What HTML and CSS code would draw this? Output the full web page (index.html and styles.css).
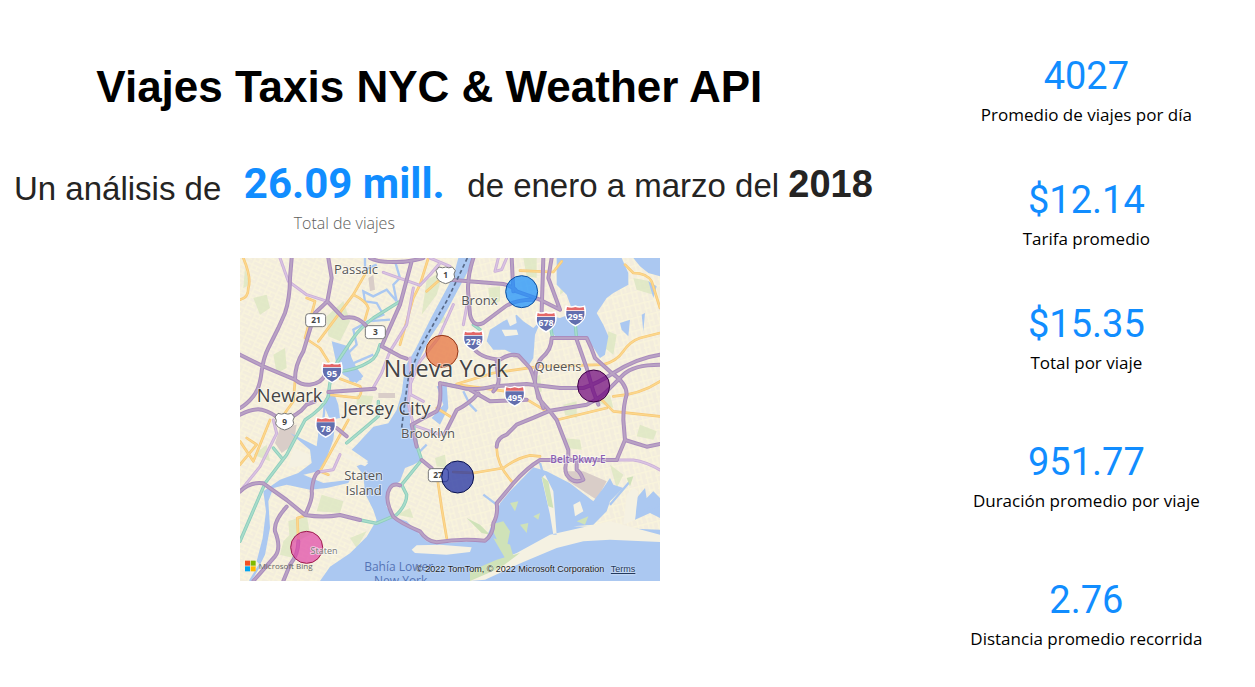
FILE: index.html
```html
<!DOCTYPE html>
<html lang="es">
<head>
<meta charset="utf-8">
<meta name="viewport" content="width=device-width, initial-scale=1">
<title>Viajes Taxis NYC &amp; Weather API</title>
<link rel="stylesheet" href="styles.css">
</head>
<body>
<div class="report">
  <main class="overview">
    <h1 class="title">Viajes Taxis NYC &amp; Weather API</h1>
    <div class="summary">
      <p class="phrase phrase-start">Un análisis de</p>
      <p class="total"><strong class="total-value">26.09 mill.</strong><span class="total-label">Total de viajes</span></p>
      <p class="phrase">de enero a marzo del <b class="year">2018</b></p>
    </div>
    <figure class="map">
      <svg class="map-canvas" viewBox="0 0 1260 969" role="img" aria-label="Mapa de Nueva York">
        <defs>
          <pattern id="streets" width="34" height="26" patternUnits="userSpaceOnUse" patternTransform="rotate(24)">
            <path class="street" d="M0 3H34M8 0V26M24 0V14M8 15H34"/>
          </pattern>
          <pattern id="streets-east" width="30" height="38" patternUnits="userSpaceOnUse" patternTransform="rotate(-14)">
            <path class="street" d="M0 5H30M5 0V38M18 5V38M0 24H18"/>
          </pattern>
          <g id="interstate">
            <path class="shield-edge" d="M-29-30Q-14-24 0-30Q14-24 29-30Q36-8 28 10Q18 26 0 34Q-18 26-28 10Q-36-8-29-30Z"/>
            <path class="shield-blue" d="M-27-13H27Q29 0 24 10Q15 23 0 29Q-15 23-24 10Q-29 0-27-13Z"/>
            <path class="shield-red" d="M-25-25Q-12-20 0-25Q12-20 25-25L27-15H-27Z"/>
          </g>
          <path id="us-route" class="route" d="M-20-23Q-9-18 0-23Q9-18 20-23L29-12Q22-2 27 8Q22 21 0 27Q-22 21-27 8Q-22-2-29-12Z"/>
          <g id="road-lilac">
            <path d="M120 0L145 70L200 110L262 130M520 90L500 200L450 280L425 345L398 392M430 43L540 82L570 50L600 15M570 0L630 25M775 0L765 40L785 35L800 0M100 486L110 526L60 626L0 700M235 642L280 635L300 590M1130 606L1180 606Q1220 612 1260 636M640 140L595 240L540 310L510 380L505 440L520 500M510 300L512 410L550 430M515 500L600 530M685 120L670 200"/>
          </g>
          <g id="road-purple">
            <path d="M155 0L150 60Q150 120 135 165L115 210L85 270Q70 300 65 340Q60 390 40 415Q20 440 0 450M265 0L275 60L262 130L225 165L190 280Q165 320 165 365M0 290L70 325L165 365Q185 382 210 380Q245 375 255 350M262 130L310 180Q350 170 380 205M390 0Q410 12 460 12Q500 14 550 0M515 10L480 140L440 230L425 265L480 295L500 302M265 402L405 392M0 470Q40 450 65 455Q100 465 120 486Q170 480 200 440L225 430"/>
            <path d="M700 0Q680 60 685 110L690 170Q700 210 730 195L790 150Q820 125 880 125M630 65L790 78Q820 85 830 100L900 125L960 155M815 0L820 100M910 0L905 160M935 0L925 60L960 155M700 270Q720 300 780 305Q810 285 835 292L870 330Q885 360 895 420L930 460L950 486L985 576V606M935 240Q935 275 905 300Q885 320 885 380L910 450M935 240H1040Q1055 270 1065 300L1115 345Q1160 375 1160 410Q1150 440 1150 486L1155 546L1130 606M1010 245L1040 330L1060 400L1075 440M600 376L660 388Q700 400 760 385L860 378L960 390L1030 390Q1075 375 1120 345Q1190 300 1260 290M690 395L750 430L860 425M760 400Q780 380 775 355Q770 330 770 305M770 566Q770 540 800 530L830 500Q880 480 930 458L1040 440Q1080 420 1100 400L1150 350Q1180 320 1260 320"/>
            <path d="M0 701Q30 670 70 676L140 726L195 771Q250 780 300 771L360 786M195 771Q220 720 215 700Q220 650 235 642M140 746Q100 790 105 820Q125 870 105 895L40 969M175 850Q175 890 150 920L130 969M460 776Q430 720 450 690Q460 675 480 682M460 776Q480 795 540 820Q560 850 590 853Q660 840 735 848Q760 830 760 796Q775 770 770 736L820 676Q860 630 900 606H1130M1155 546L1220 566L1260 558M985 600Q970 625 980 650Q1000 680 1030 665Q1020 640 1010 635V610M545 606L575 631M600 376Q605 440 590 460L550 481L515 500L530 566M715 406Q690 435 650 456L615 526M290 510L320 535"/>
          </g>
          <g id="road-teal">
            <path d="M480 130L400 180Q360 210 340 240L300 300Q270 340 265 415Q250 450 195 486L140 590L75 676L0 850M420 260Q410 300 390 310Q350 335 300 340M100 570L125 600M320 555L380 505L415 475V430M930 200L938 240M1005 190L1010 245M700 200L720 215M360 786L410 796L470 770Q500 740 500 710L485 680L545 606L530 560L520 500M610 376L650 386"/>
          </g>
          <g id="road-orange">
            <path d="M10 0Q35 60 25 90Q25 120 0 125M200 120L225 130L195 240L240 270L265 310M380 40L340 110L235 250M340 110Q380 130 385 150L375 185M565 0L540 80L520 120L480 260M605 60L560 100M300 362L360 385Q370 400 355 420L265 410M165 370L160 430L120 486M0 550L40 610L90 486M0 620L50 560L20 540M325 486L240 640L265 650M175 850L172 780L190 775M650 378L760 345L900 325L1090 320Q1130 310 1150 280Q1170 250 1200 240L1260 225M650 380L800 400L870 430L920 460M1155 20L1180 45Q1220 45 1235 70L1260 150M1080 420L1120 460L1260 475M1120 415Q1200 410 1260 370M950 486L1100 450M840 38L940 42L965 10M700 645L790 630Q830 600 870 592L900 595M770 570Q770 620 815 670M592 660L605 750L620 840M590 450L630 475M640 642L700 645"/>
          </g>
        </defs>

        <rect class="land" width="1260" height="969"/>
        <rect fill="url(#streets)" width="630" height="969"/>
        <rect fill="url(#streets-east)" x="610" width="650" height="969"/>

        <g class="park">
          <path d="M40 120L80 110L90 150L60 170ZM100 290L135 270L140 330L110 345ZM260 175L310 130L330 190L300 250L265 235ZM15 30L30 80L10 90ZM350 410L400 415L390 450L350 440ZM560 65L610 40L590 110L545 170ZM590 200L610 170L620 190ZM660 30L680 20L675 70ZM745 90L780 85L780 130L750 140ZM850 0L890 0L890 60L860 55ZM965 50L990 45L985 90L960 110ZM1120 30L1155 50L1140 75ZM1105 220L1130 230L1120 290L1095 270ZM1180 60L1230 70L1240 110L1190 95ZM1060 430L1110 410L1120 450ZM880 360L900 350L905 400L885 410ZM970 440L1010 430L1010 480L975 470ZM145 790L200 770L210 830L150 860ZM245 710L310 730L300 765L230 760ZM130 850L160 820L160 900L120 890ZM330 840L380 820L350 870ZM585 600L615 590L620 630L590 625ZM970 540L1020 545L1025 575L980 570ZM1110 620L1150 650L1130 690ZM470 770L510 750L520 780ZM1200 500L1250 520L1240 545L1190 535ZM40 590L80 560L90 610Z"/>
        </g>
        <path class="industry" d="M120 510L170 500L160 560L125 585L105 555ZM970 640L1030 640L1100 670L1070 725L985 670ZM810 265L860 280L865 305L820 300ZM385 60L400 50L405 95L390 100ZM415 405H465V420H415Z"/>

        <g class="water">
          <path d="M655 0H705L630 140L600 195L570 240L545 290L520 350L510 416L510 496L525 560L545 606L520 620L495 630L480 670L450 690L440 746L460 776L500 790L560 850L600 856L735 848L770 766L780 736L810 700L880 628L920 640L990 676L1060 730L1090 690L1110 660L1120 680L1150 690L1110 730L1100 760L1060 800L1000 805L1260 815V969H240L270 926L330 886L380 836L410 786L400 756L375 706L370 650L350 625L385 610L335 575L350 560L400 506L445 496L470 456L485 406L495 326L525 276L575 176L605 120L640 55Z"/>
          <path d="M950 0H1145L1165 45L1165 80L1120 105L1100 120L1070 165L1090 200L1105 235L1095 290L1080 300L1055 260L1040 235L1000 235L945 235L925 205L900 195L885 230L880 300L865 325L835 295L795 275L760 275L740 250L750 215L790 190L830 170L850 190L880 210L920 170L960 180L1000 165L980 110L950 80Z"/>
          <path d="M1180 0H1260V55L1225 45L1200 25ZM1225 70L1250 85L1240 120ZM1140 195L1170 185L1165 235L1145 215ZM1205 170L1215 165L1210 220Z"/>
          <path d="M240 486L285 500L280 545L260 600L235 640L190 650L250 675L330 665L325 675L260 690L210 695L140 680L100 690L85 730L90 810L75 890L60 920L50 910L68 840L78 760L70 700L120 665L175 645L215 615L210 575L150 525L230 565Z"/>
          <path d="M275 250L325 265L335 300L350 330L370 355L350 375L310 350L290 320ZM260 410L280 400L295 440L300 480L270 486L255 450ZM320 335L360 345L365 365L330 375ZM590 385L620 380L625 450L600 500L575 480L610 440Z"/>
          <path d="M1190 720L1215 690L1220 720L1240 700L1260 720V780L1230 765L1185 785Z"/>
        </g>
        <g class="stream">
          <path d="M470 130L440 95L400 115L370 100L375 130L410 135L430 170L395 185L340 215L350 260L320 290M375 0V35L410 20M465 10L480 60L460 80L470 130M450 185L380 190M255 430L250 486M400 290L330 320M670 400L690 440L710 460M560 560L520 600M730 710L770 740M1020 745L1085 745M1110 740L1170 670M900 615L910 650M60 920L30 969M1210 760L1260 740"/>
        </g>
        <g class="island">
          <path d="M800 180L825 165L830 195L810 205ZM785 215L830 215L835 230L795 235ZM515 875L530 862L600 860L695 868L690 882L620 890L525 885ZM520 655L535 640L530 650ZM690 955L720 930L830 885L930 830L1030 808L1110 790L1260 830V852L1110 845L1030 850L950 870L850 912L735 965L690 969ZM1000 740L1020 730L1030 760L1005 775ZM930 770L940 830L950 830L940 700L915 650L905 660ZM1185 785L1150 800L1160 710L1180 690L1195 700Z"/>
          <path d="M160 570L210 590L205 620L145 630ZM305 580L385 615L375 625L315 600Z"/>
        </g>
        <g class="marsh">
          <path d="M750 800L790 790L810 820L800 870L780 865ZM810 735L835 730L825 760ZM840 800L865 795L860 825ZM880 775L900 765L895 785ZM905 655L925 670L940 750L925 745ZM690 940L770 905L840 885L780 930L690 969ZM680 780L720 800L750 830L725 825ZM1010 790L1045 775L1035 800ZM1160 660L1180 655L1170 685ZM810 860L820 895L795 900L760 840Z"/>
        </g>

        <use href="#road-orange" class="road orange-edge"/>
        <use href="#road-orange" class="road orange-fill"/>
        <use href="#road-lilac" class="road lilac-edge"/>
        <use href="#road-lilac" class="road lilac-fill"/>
        <use href="#road-teal" class="road teal-edge"/>
        <use href="#road-teal" class="road teal-fill"/>
        <use href="#road-purple" class="road purple-edge"/>
        <use href="#road-purple" class="road purple-fill"/>
        <path class="boundary" d="M682 0L625 120L540 270L505 360L495 430L485 510"/>

        <g class="signs">
          <use href="#interstate" x="276" y="342"/><text class="sign-light" x="276" y="358">95</text>
          <use href="#interstate" x="700" y="246"/><text class="sign-light" x="700" y="260">278</text>
          <use href="#interstate" x="918" y="190"/><text class="sign-light" x="918" y="204">678</text>
          <use href="#interstate" x="1006" y="172"/><text class="sign-light" x="1006" y="186">295</text>
          <use href="#interstate" x="824" y="413"/><text class="sign-light" x="824" y="428">495</text>
          <use href="#interstate" x="257" y="506"/><text class="sign-light" x="257" y="522">78</text>
          <rect class="route" x="197" y="167" width="60" height="39" rx="9"/><text class="sign-dark" x="228" y="195">21</text>
          <rect class="route" x="376" y="203" width="60" height="39" rx="9"/><text class="sign-dark" x="406" y="232">3</text>
          <rect class="route" x="565" y="632" width="60" height="39" rx="9"/><text class="sign-dark" x="594" y="660">27</text>
          <use href="#us-route" x="617" y="50"/><text class="sign-dark" x="617" y="60">1</text>
          <use href="#us-route" x="134" y="489"/><text class="sign-dark" x="134" y="500">9</text>
        </g>

        <g class="pins">
          <circle class="pin pin-blue" cx="845" cy="101" r="48"/>
          <circle class="pin pin-orange" cx="606" cy="280" r="48"/>
          <circle class="pin pin-purple" cx="1061" cy="384" r="48"/>
          <circle class="pin pin-navy" cx="653" cy="657" r="48"/>
          <circle class="pin pin-pink" cx="200" cy="868" r="48"/>
        </g>

        <g class="places">
          <text class="town" x="348" y="48">Passaic</text>
          <text class="city" x="618" y="356">Nueva York</text>
          <text class="suburb" x="149" y="432">Newark</text>
          <text class="suburb" x="440" y="470">Jersey City</text>
          <text class="town" x="718" y="140">Bronx</text>
          <text class="town" x="954" y="339">Queens</text>
          <text class="town" x="564" y="539">Brooklyn</text>
          <text class="town" x="371" y="666">Staten</text>
          <text class="town" x="371" y="712">Island</text>
          <text class="village" x="252" y="888">Staten</text>
          <text class="sea" x="476" y="938">Bahía Lower</text>
          <text class="sea" x="482" y="980">New York</text>
          <text class="parkway" x="1014" y="615">Belt Pkwy E</text>
        </g>
        <path fill="#f25022" d="M15 908h15v15h-15z"/><path fill="#7fba00" d="M32 908h15v15h-15z"/>
        <path fill="#00a4ef" d="M15 925h15v15h-15z"/><path fill="#ffb900" d="M32 925h15v15h-15z"/>
        <text class="bing" x="56" y="933">Microsoft Bing</text>
      </svg>
      <figcaption class="credits">© 2022 TomTom, © 2022 Microsoft Corporation <a class="terms" href="#">Terms</a></figcaption>
    </figure>
  </main>
  <aside class="stats">
    <p class="stat"><strong class="stat-value">4027</strong><span class="stat-label">Promedio de viajes por día</span></p>
    <p class="stat"><strong class="stat-value">$12.14</strong><span class="stat-label">Tarifa promedio</span></p>
    <p class="stat"><strong class="stat-value">$15.35</strong><span class="stat-label">Total por viaje</span></p>
    <p class="stat stat-apart"><strong class="stat-value">951.77</strong><span class="stat-label">Duración promedio por viaje</span></p>
    <p class="stat stat-apart"><strong class="stat-value">2.76</strong><span class="stat-label">Distancia promedio recorrida</span></p>
  </aside>
</div>
</body>
</html>
```
FILE: styles.css
```css
* { box-sizing: border-box; }

body {
  margin: 0;
  background: #fff;
  color: #252423;
  font-family: "Liberation Sans", Arial, sans-serif;
}

h1, p, figure { margin: 0; }

.report {
  display: grid;
  grid-template-columns: minmax(0, 8fr) minmax(0, 3fr);
}

/* Overview */
.overview { padding: 60px 26px 24px 14px; }

.title {
  padding-right: 42px;
  color: #000;
  font-size: 44px;
  line-height: 54px;
  text-align: center;
}

.summary {
  display: flex;
  align-items: flex-start;
  gap: 22px;
  margin-top: 46px;
}

.phrase {
  padding-top: 2px;
  font-size: 33px;
  line-height: 44px;
  white-space: nowrap;
}

.phrase-start { padding-top: 7px; }

.year { font-size: 38px; }

.total {
  display: flex;
  flex-direction: column;
  align-items: center;
  width: 202px;
}

.total-value {
  color: #118dff;
  font-family: Roboto, sans-serif;
  font-size: 42px;
  line-height: 48px;
  white-space: nowrap;
}

.total-label {
  color: #605e5c;
  font-family: "Open Sans", "Noto Sans", sans-serif;
  font-size: 16px;
  font-weight: 300;
  line-height: 30px;
}

/* Map */
.map {
  position: relative;
  width: 100%;
  max-width: 420px;
  margin: 20px auto 0;
}

.map-canvas {
  display: block;
  width: 100%;
  font-family: "Open Sans", "Noto Sans", sans-serif;
}

.credits {
  position: absolute;
  right: 25px;
  bottom: 6px;
  color: #1b1b1b;
  font-size: 9px;
  line-height: 12px;
  text-shadow: 0 0 2px #fff;
  white-space: nowrap;
}

.terms { margin-left: 4px; color: #23395d; }

.land { fill: #f3eddd; }
.street { fill: none; stroke: #f9f4dc; stroke-width: 4; }
.park { fill: #d9e6bd; opacity: .7; }
.industry { fill: #d9cdc8; }
.water { fill: #abc8f1; }
.stream { fill: none; stroke: #abc8f1; stroke-width: 7; }
.island { fill: #f5f1e2; }
.marsh { fill: #cfe2b8; }

.road { fill: none; stroke-linejoin: round; stroke-linecap: round; }
.orange-edge { stroke: #f7c877; stroke-width: 8; }
.orange-fill { stroke: #fcd78c; stroke-width: 4; }
.lilac-edge { stroke: #cbaed8; stroke-width: 9; }
.lilac-fill { stroke: #d9c4e2; stroke-width: 4; }
.teal-edge { stroke: #8ccdbb; stroke-width: 10; }
.teal-fill { stroke: #a8dccb; stroke-width: 5; }
.purple-edge { stroke: #aa8cbd; stroke-width: 12; }
.purple-fill { stroke: #b9a2c4; stroke-width: 6; }
.boundary { fill: none; stroke: #586a88; stroke-width: 5; stroke-dasharray: 12 8; }

.shield-edge { fill: #fff; }
.shield-blue { fill: #626eae; }
.shield-red { fill: #e46767; }
.route { fill: #fff; stroke: #777; stroke-width: 3; }
.signs text { font-size: 25px; font-weight: 700; text-anchor: middle; }
.signs .sign-light { fill: #fff; font-size: 27px; }
.sign-dark { fill: #444; }

.pin { fill-opacity: .7; stroke-width: 3; }
.pin-blue { fill: #118dff; stroke: #0d4f9f; }
.pin-orange { fill: #e66c37; stroke: #933517; }
.pin-purple { fill: #6b007b; stroke: #3d0046; }
.pin-navy { fill: #12239e; stroke: #09114f; }
.pin-pink { fill: #e044a7; stroke: #9c1b4d; }

.places text {
  fill: #555;
  stroke: #fff;
  stroke-width: 5;
  stroke-opacity: .6;
  paint-order: stroke;
  text-anchor: middle;
}
.places .city { fill: #444; font-size: 70px; }
.places .suburb { fill: #444; font-size: 55px; }
.places .town { font-size: 39px; }
.places .village { font-size: 27px; fill: #777; }
.places .sea { font-size: 36px; fill: #5574b5; stroke: none; }
.places .parkway { font-size: 30px; font-weight: 600; fill: #8a5fb0; }
.bing { fill: #666; font-size: 24px; }

/* Key figures */
.stats {
  display: flex;
  flex-direction: column;
  gap: 46px;
  padding-top: 50px;
  padding-left: 5px;
}

.stat {
  display: flex;
  flex-direction: column;
  align-items: center;
}

.stat-apart { margin-top: 14px; }

.stat-value {
  color: #118dff;
  font-family: Roboto, sans-serif;
  font-size: 38px;
  font-weight: 400;
  line-height: 52px;
}

.stat-label {
  color: #000;
  font-family: "Open Sans", "Noto Sans", sans-serif;
  font-size: 17px;
  font-weight: 400;
  line-height: 26px;
  white-space: nowrap;
}
```
